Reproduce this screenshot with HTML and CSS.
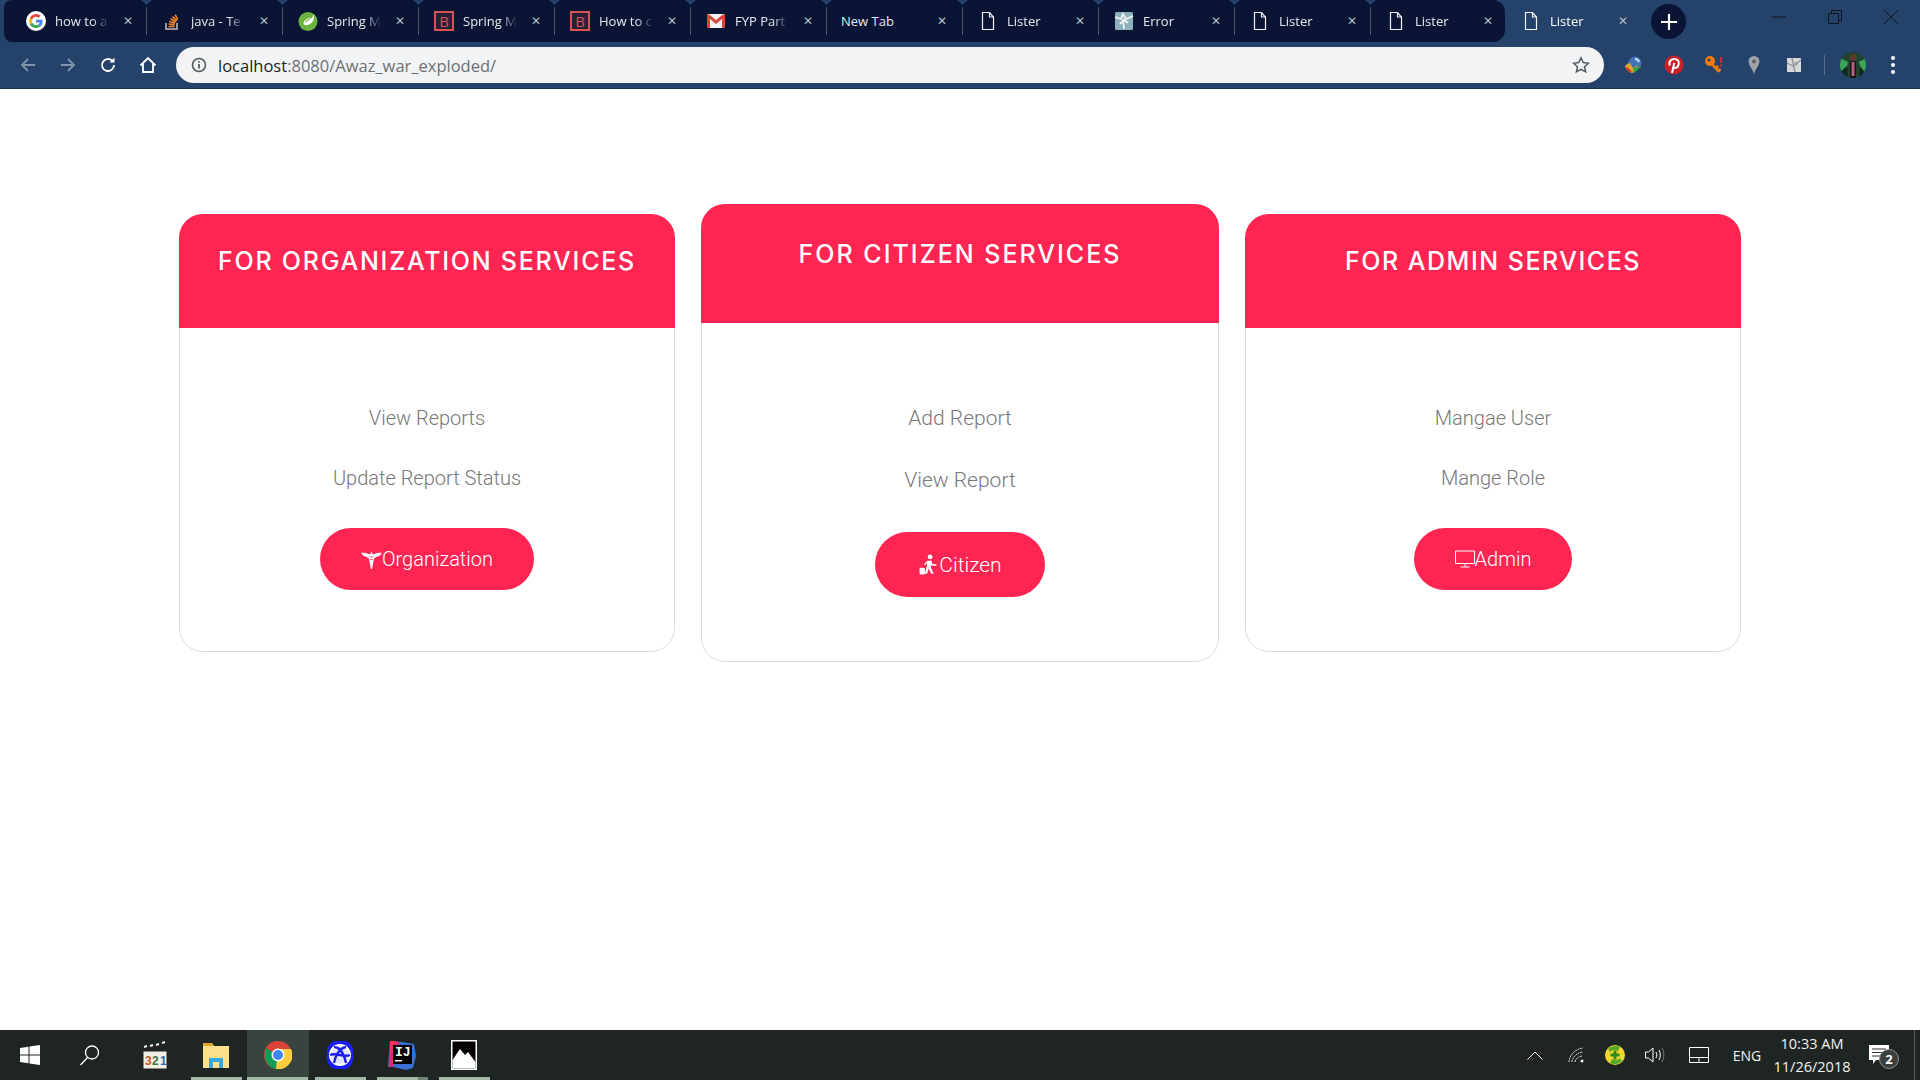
FILE: index.html
```html
<!DOCTYPE html>
<html lang="en">
<head>
    <meta charset="utf-8">
    <title>Lister</title>
    <link rel="stylesheet" href="styles.css">
</head>
<body>
    <header class="browser">
        <div class="tabstrip">
            <div class="tabs">
                <div class="tab">
                    <svg class="tab-icon" viewBox="0 0 20 20"><circle cx="10" cy="10" r="10" fill="#fff"/><path d="M16.6 10.2c0-.5 0-1-.1-1.400H10v2.700h3.700a3.200 3.200 0 0 1-1.400 2.100l2.200 1.700c1.300-1.200 2.100-3 2.100-5.100z" fill="#4285f4"/><path d="M10 17c1.900 0 3.400-.6 4.500-1.700l-2.200-1.700c-.6.4-1.400.7-2.300.7-1.800 0-3.300-1.200-3.800-2.800l-2.300 1.800C5 15.500 7.300 17 10 17z" fill="#34a853"/><path d="M6.200 11.500a4.200 4.200 0 0 1 0-2.900L3.900 6.800a7 7 0 0 0 0 6.500z" fill="#fbbc05"/><path d="M10 5.800c1 0 1.900.4 2.600 1l2-2A7 7 0 0 0 3.900 6.800l2.300 1.800C6.700 7 8.200 5.800 10 5.800z" fill="#ea4335"/></svg>
                    <span class="tab-title">how to a</span><span class="tab-close">&#x2715;</span>
                </div>
                <div class="tab">
                    <svg class="tab-icon" viewBox="0 0 20 20"><path d="M4 12v6h11v-6" fill="none" stroke="#bcbbbb" stroke-width="1.600"/><path d="M6.500 15.500h6M6.700 13l6 .6M7.300 10.400l5.800 1.500M8.600 7.800l5.200 3M10.500 5.600l4.300 4.100M13.200 3.700l2.500 5" stroke="#f48024" stroke-width="1.600" fill="none"/></svg>
                    <span class="tab-title">java - Te</span><span class="tab-close">&#x2715;</span>
                </div>
                <div class="tab">
                    <svg class="tab-icon" viewBox="0 0 20 20"><circle cx="10" cy="10.500" r="9.500" fill="#6db33f"/><path d="M16 3c.5 5-1.500 10-6.500 11-2 .4-3.500-.2-4-1 0-4 4.500-6.500 8-6-3 .5-6 2.500-7 5.500 4-3.500 8-4.500 9.500-9.500z" fill="#fff"/></svg>
                    <span class="tab-title">Spring M</span><span class="tab-close">&#x2715;</span>
                </div>
                <div class="tab">
                    <span class="tab-icon boot-icon">B</span>
                    <span class="tab-title">Spring M</span><span class="tab-close">&#x2715;</span>
                </div>
                <div class="tab">
                    <span class="tab-icon boot-icon">B</span>
                    <span class="tab-title">How to c</span><span class="tab-close">&#x2715;</span>
                </div>
                <div class="tab">
                    <svg class="tab-icon" viewBox="0 0 20 20"><rect x="1" y="3" width="18" height="14" rx="1" fill="#f3f3f3"/><path d="M1 4v13h3V8l6 5 6-5v9h3V4l-1.500-1L10 9 2.500 3z" fill="#d9473a"/></svg>
                    <span class="tab-title">FYP Part</span><span class="tab-close">&#x2715;</span>
                </div>
                <div class="tab tab-noicon">
                    <span class="tab-title">New Tab</span><span class="tab-close">&#x2715;</span>
                </div>
                <div class="tab">
                    <svg class="tab-icon" viewBox="0 0 20 20"><path class="doc" d="M4.500 1.500h7l4 4.500v12.500h-11zM11.500 1.500V6h4"/></svg>
                    <span class="tab-title">Lister</span><span class="tab-close">&#x2715;</span>
                </div>
                <div class="tab">
                    <svg class="tab-icon" viewBox="0 0 20 20"><rect x="1" y="1" width="18" height="18" rx="1.500" fill="#8fb0bd"/><path d="M1 6l6 2 2-5 3 5 7-3M9 8l1 10M6 13l4-4 4 3" stroke="#eef2f3" stroke-width="1.800" fill="none"/></svg>
                    <span class="tab-title">Error</span><span class="tab-close">&#x2715;</span>
                </div>
                <div class="tab">
                    <svg class="tab-icon" viewBox="0 0 20 20"><path class="doc" d="M4.500 1.500h7l4 4.500v12.500h-11zM11.500 1.500V6h4"/></svg>
                    <span class="tab-title">Lister</span><span class="tab-close">&#x2715;</span>
                </div>
                <div class="tab tab-last">
                    <svg class="tab-icon" viewBox="0 0 20 20"><path class="doc" d="M4.500 1.500h7l4 4.500v12.500h-11zM11.500 1.500V6h4"/></svg>
                    <span class="tab-title">Lister</span><span class="tab-close">&#x2715;</span>
                </div>
            </div>
            <div class="tab tab-active">
                <svg class="tab-icon" viewBox="0 0 20 20"><path class="doc" d="M4.500 1.500h7l4 4.500v12.500h-11zM11.500 1.500V6h4"/></svg>
                <span class="tab-title">Lister</span><span class="tab-close">&#x2715;</span>
            </div>
            <div class="new-tab">
                <svg viewBox="0 0 16 16" width="16" height="16"><path d="M8 0v16M0 8h16" stroke="#fff" stroke-width="2.200"/></svg>
            </div>
            <div class="win-controls">
                <svg class="win-btn" viewBox="0 0 14 14"><path d="M0 7h14" stroke="#10141c" stroke-width="1"/></svg>
                <svg class="win-btn" viewBox="0 0 14 14"><path d="M.5 3.500h10v10H.500zM3.500 3.500v-3h10v10h-3" stroke="#10141c" fill="none"/></svg>
                <svg class="win-btn" viewBox="0 0 14 14"><path d="M0 0l14 14M14 0L0 14" stroke="#10141c"/></svg>
            </div>
        </div>
        <div class="toolbar">
            <div class="nav-btn"><svg viewBox="0 0 18 18"><path d="M16 9H3M9 3L3 9l6 6" class="nav-dim"/></svg></div>
            <div class="nav-btn"><svg viewBox="0 0 18 18"><path d="M2 9h13M9 3l6 6-6 6" class="nav-dim"/></svg></div>
            <div class="nav-btn"><svg viewBox="0 0 18 18"><path d="M15 9a6 6 0 1 1-1.800-4.300" class="nav-on"/><path d="M15.500 1.500v5h-5z" fill="#fff"/></svg></div>
            <div class="nav-btn"><svg viewBox="0 0 18 18"><path d="M1.500 9.500L9 2l7.500 7.500M4 8v8h10V8" class="nav-on"/></svg></div>
            <div class="omnibox">
                <svg class="omni-info" viewBox="0 0 16 16"><circle cx="8" cy="8" r="6.500" fill="none" stroke="#555a60" stroke-width="1.600"/><path d="M8 7v4.500M8 4.200v1.600" stroke="#555a60" stroke-width="1.800"/></svg>
                <span class="url"><span class="url-host">localhost</span>:8080/Awaz_war_exploded/</span>
                <svg class="omni-star" viewBox="0 0 18 18"><path d="M9 1.800l2.200 4.800 5.200.6-3.900 3.500 1.100 5.200L9 13.300l-4.600 2.600 1.100-5.200-3.900-3.500 5.200-.6z" fill="none" stroke="#555a60" stroke-width="1.500"/></svg>
            </div>
            <div class="ext-btn"><svg viewBox="0 0 20 20"><circle cx="11" cy="8" r="6.500" fill="#3f73b5"/><path d="M11 4a4 4 0 0 1 4 3" stroke="#cfe3f5" stroke-width="2" fill="none"/><path d="M1 12c1-3 3-4 5-4l3 5 5-3-5 8c-3 0-6-2-8-6z" fill="#e0a22b"/><path d="M9 13l9-2-8 7z" fill="#35a545"/><path d="M2 13c2 1 3 2 5 4" stroke="#c4392d" stroke-width="2" fill="none"/></svg></div>
            <div class="ext-btn"><svg viewBox="0 0 20 20"><circle cx="10" cy="10" r="9.500" fill="#cb2027"/><path d="M8 18l2.300-10M5.800 10.500c-1.500-4 1.500-6.500 4.700-6.500 3 0 4.700 2 4.200 5-.5 3-2.500 4.500-4.300 3.800-.7-.3-1-.7-1.200-1.300" fill="none" stroke="#fff" stroke-width="2"/></svg></div>
            <div class="ext-btn"><svg viewBox="0 0 20 20"><circle cx="6" cy="6" r="5" fill="#f57c00"/><circle cx="5" cy="5" r="1.500" fill="#24426a"/><path d="M8 9l7 8M12 13l2-2M14.500 16l2-2" stroke="#f57c00" stroke-width="2.600" fill="none"/><path d="M17 2v6M17 9.500v2" stroke="#d32f2f" stroke-width="1.800"/></svg></div>
            <div class="ext-btn"><svg viewBox="0 0 20 20"><path d="M10 1a5.500 5.500 0 0 0-5.500 5.500C4.500 10 8.500 14 10 19c1.500-5 5.500-9 5.500-12.500A5.500 5.500 0 0 0 10 1z" fill="#9ea3a8"/><circle cx="10" cy="6.500" r="2" fill="#5f6368"/></svg></div>
            <div class="ext-btn"><svg viewBox="0 0 20 20"><rect x="3" y="3" width="14" height="14" fill="#d6d8da"/><path d="M3 8l6 3 8-6M8 3l3 14M13 10l-2-3" stroke="#8c9094" stroke-width="1.300" fill="none"/></svg></div>
            <div class="toolbar-sep"></div>
            <div class="avatar"><svg viewBox="0 0 26 26"><defs><clipPath id="av"><circle cx="13" cy="13" r="13"/></clipPath></defs><g clip-path="url(#av)"><rect width="26" height="26" fill="#20442f"/><path d="M0 6l8 4-2 8-6 2zM26 6l-7 4 2 9 5 1z" fill="#3da557"/><path d="M0 20l7-6 1 12H0zM26 22l-6-8-1 12h7z" fill="#0f2a1c"/><rect x="10" y="9" width="6" height="17" fill="#141419"/><rect x="11.500" y="10" width="3" height="14" fill="#b4617f"/><circle cx="13" cy="5.500" r="3.500" fill="#5a3c2c"/></g></svg></div>
            <div class="menu-dots"><i></i><i></i><i></i></div>
        </div>
    </header>

    <main class="services">
        <section class="card">
            <h2 class="card-title">FOR ORGANIZATION SERVICES</h2>
            <ul class="card-list">
                <li>View Reports</li>
                <li>Update Report Status</li>
            </ul>
            <a class="btn" href="#">
                <svg class="btn-icon" viewBox="0 0 20 20"><path d="M0 3.500c3 0 6 .3 8.600 1.700L10 2.500l1.400 2.700C14 3.800 17 3.500 20 3.500c-1 2-3 3.500-5.500 4.200L12.500 9 10.500 19h-1L7.500 9 5.500 7.700C3 7 1 5.500 0 3.500z" fill="#fff"/><path d="M8 7.500h4M8.500 10h3" stroke="#ff2553" stroke-width=".7"/></svg>Organization
            </a>
        </section>

        <section class="card card-featured">
            <h2 class="card-title">FOR CITIZEN SERVICES</h2>
            <ul class="card-list">
                <li>Add Report</li>
                <li>View Report</li>
            </ul>
            <a class="btn" href="#">
                <svg class="btn-icon" viewBox="0 0 20 20"><circle cx="11.500" cy="2.800" r="2.300" fill="#fff"/><path d="M9 6.500h4l.5 3 4 .3v1.500l-5-.4-.3 2 2.800 6h-2.300l-2.500-5-1.600 5H6.500l2-7.600.2-3.200-1.800 2.500-1.400-.8z" fill="#fff"/><rect x="1.500" y="13" width="5" height="6.500" rx="1" fill="#fff"/></svg>Citizen
            </a>
        </section>

        <section class="card card-admin">
            <h2 class="card-title">FOR ADMIN SERVICES</h2>
            <ul class="card-list">
                <li>Mangae User</li>
                <li>Mange Role</li>
            </ul>
            <a class="btn" href="#">
                <svg class="btn-icon btn-icon-wide" viewBox="0 0 20 18"><path d="M.5 1h19v12.500H.5zM10 13.500V17M5.500 17h9" fill="none" stroke="#fff" stroke-width="1"/></svg>Admin
            </a>
        </section>
    </main>

    <footer class="taskbar">
        <div class="task-slot task-start">
            <svg viewBox="0 0 20 20" width="20" height="20"><path d="M0 3l8.500-1.200v7.700H0zM9.500 1.600L20 0v9.500H9.500zM0 10.500h8.500v7.700L0 17zM9.500 10.500H20V20L9.500 18.400z" fill="#fff"/></svg>
        </div>
        <div class="task-slot task-search">
            <svg viewBox="0 0 22 22" width="22" height="22"><circle cx="13" cy="8.500" r="6.500" fill="none" stroke="#fff" stroke-width="1.300"/><path d="M8.500 13.500L1.500 21" stroke="#fff" stroke-width="1.300"/></svg>
        </div>
        <div class="task-slot">
            <svg viewBox="0 0 28 32" width="28" height="32"><path d="M1 8l25-5 1 5-25 5z" fill="#222"/><path d="M4 8l3-1M10 7l3-1M16 6l3-1M22 4l3-1" stroke="#eee" stroke-width="2"/><rect x="3" y="12" width="24" height="18" fill="#f2efe6" stroke="#222"/><text x="5" y="26" class="mpc-num" fill="#c8562b">3</text><text x="12" y="26" class="mpc-num" fill="#3a7a3a">2</text><text x="20" y="26" class="mpc-num" fill="#2c6bb0">1</text></svg>
        </div>
        <div class="task-slot task-open">
            <svg viewBox="0 0 28 28" width="28" height="28"><path d="M1 2h9l2 3h15v22H1z" fill="#ffe08a"/><path d="M1 2h9l1 3H1z" fill="#e2a52c"/><path d="M7 17h14v10h-4v-6h-6v6H7z" fill="#39a9e0"/></svg>
        </div>
        <div class="task-slot task-open task-active">
            <svg viewBox="0 0 28 28" width="28" height="28"><circle cx="14" cy="14" r="14" fill="#db4437"/><path d="M14 14L2 7 .5 14C1 21 6 27 12 28z" fill="#0f9d58"/><path d="M14 8h13a14 14 0 0 1-15 20z" fill="#ffcd40"/><circle cx="14" cy="14" r="6.500" fill="#fff"/><circle cx="14" cy="14" r="5" fill="#4285f4"/></svg>
        </div>
        <div class="task-slot task-open">
            <svg viewBox="0 0 28 30" width="28" height="30"><path d="M8 1h12c6 2 8 8 7 14 1 7-2 12-7 14H8c-5-2-8-8-7-14C0 9 3 3 8 1z" fill="#1c1ff0"/><circle cx="14" cy="15" r="10" fill="#dfe3ff" stroke="#fff" stroke-width="2"/><path d="M8 7c7 0 11 10 12 16M20 7C13 8 9 17 8 23M4 15c7-3 13 3 20 0" fill="none" stroke="#1c1ff0" stroke-width="2.400"/></svg>
        </div>
        <div class="task-slot task-open task-split">
            <svg viewBox="0 0 30 30" width="30" height="30"><path d="M3 1l12 1 12 2 2 12-3 12-7 2-13-3-5 0z" fill="#3b6fd4"/><path d="M3 1l10 1L6 27H2z" fill="#d12f6d"/><path d="M3 1l6 0-6 12z" fill="#ff3158"/><rect x="6" y="5" width="19" height="19" fill="#000"/><text x="8" y="16" class="ij-text">IJ</text><rect x="8" y="20" width="7" height="1.500" fill="#fff"/></svg>
        </div>
        <div class="task-slot task-open">
            <svg viewBox="0 0 26 30" width="26" height="30"><rect width="26" height="30" fill="#fff"/><rect x="1.500" y="1.500" width="23" height="27" fill="#000"/><path d="M1.500 28.500V20L9 9l5 6 3-3 7.500 10v6.500z" fill="#fff"/></svg>
        </div>
        <div class="tray">
            <div class="tray-item tray-chevron"><svg viewBox="0 0 16 9" width="16" height="9"><path d="M.5 8.500L8 1l7.500 7.500" fill="none" stroke="#fff"/></svg></div>
            <div class="tray-item tray-wifi"><svg viewBox="0 0 16 16" width="16" height="16"><path d="M1 15C1.500 8 7 2 15 1M4 15c.5-5 4.500-9 11-10M7 15c.5-3 3-5.500 7-6" fill="none" stroke="#cfd2d0" stroke-width="1" stroke-dasharray="2 .6"/><circle cx="14" cy="14" r="1.500" fill="#fff"/></svg></div>
            <div class="tray-item tray-green"><svg viewBox="0 0 20 20" width="20" height="20"><circle cx="10" cy="10" r="10" fill="#f2d82e"/><path d="M3 4a10 10 0 0 1 12-2l-2 4a6 6 0 0 0-8 1zM17 16a10 10 0 0 1-12 2l2-4a6 6 0 0 0 8-1z" fill="#5aa72c"/><path d="M10 5.500v9M5.500 10h9" stroke="#2e8b22" stroke-width="3"/></svg></div>
            <div class="tray-item tray-volume"><svg viewBox="0 0 20 16" width="20" height="16"><path d="M.5 5h3L8 1v14l-4.500-4h-3z" fill="none" stroke="#fff"/><path d="M11 5c1 1.500 1 4.500 0 6M14 3c1.700 3 1.700 7 0 10" fill="none" stroke="#fff"/><path d="M17 1c2.500 4 2.500 10 0 14" fill="none" stroke="#777"/></svg></div>
            <div class="tray-item tray-tablet"><svg viewBox="0 0 20 16" width="20" height="16"><path d="M.5.5h19v15H.500zM.5 10.500h19M10 10.500v5" fill="none" stroke="#fff"/></svg></div>
            <div class="tray-item tray-lang">ENG</div>
            <div class="tray-item tray-clock"><span>10:33 AM</span><span>11/26/2018</span></div>
            <div class="tray-item tray-notify">
                <svg viewBox="0 0 20 20" width="20" height="20"><path d="M0 0h20v15H7l-3 4v-4H0z" fill="#fff"/><path d="M3 4h14M3 7.500h14M3 11h14" stroke="#333"/></svg>
                <span class="notify-badge">2</span>
            </div>
            <div class="tray-peek"></div>
        </div>
    </footer>
</body>
</html>
```

FILE: styles.css
```css
* {
    box-sizing: border-box;
}

html, body {
    margin: 0;
    height: 100%;
}

body {
    display: flex;
    flex-direction: column;
    overflow: hidden;
    background: #fff;
    font-family: Roboto, "Liberation Sans", sans-serif;
}

/* browser chrome */

.browser {
    flex: none;
    height: 89px;
    border-bottom: 1px solid #1a3050;
    background: #24426a;
    font-family: "Open Sans", "Liberation Sans", sans-serif;
}

.tabstrip {
    display: flex;
    height: 42px;
    padding-left: 4px;
}

.tabs {
    display: flex;
    width: 1501px;
    padding-left: 7px;
    background: #0a1536;
    border-radius: 8px 12px 12px 8px;
}

.tab {
    position: relative;
    display: flex;
    flex: none;
    align-items: center;
    width: 136px;
    padding-left: 15px;
    border-right: 1px solid #47566f;
    border-image: linear-gradient(#0a1536 8px, #47566f 8px, #47566f 34px, #0a1536 34px) 1;
    color: #e6e8ec;
    font-size: 13px;
}

.tab::after {
    content: "";
    position: absolute;
    top: 0;
    right: -6px;
    width: 11px;
    height: 5px;
    background: #24426a;
    clip-path: polygon(0 0, 100% 0, 50% 100%);
}

.tab-last {
    width: 130px;
    border-right: 0;
    border-image: none;
}

.tab-last::after,
.tab-active::after {
    display: none;
}

.tab-active {
    width: 130px;
    padding-left: 16px;
    border: 0;
    border-image: none;
    color: #fff;
}

.tab-icon {
    flex: none;
    width: 20px;
    height: 20px;
    margin-right: 9px;
}

.doc {
    fill: none;
    stroke: #f2f3f5;
    stroke-width: 1.2;
}

.boot-icon {
    display: flex;
    align-items: center;
    justify-content: center;
    border: 2px solid #d9534f;
    background: #2a1e3a;
    color: #d9534f;
    font-size: 15px;
    line-height: 1;
}

.tab-title {
    width: 54px;
    overflow: hidden;
    white-space: nowrap;
    -webkit-mask-image: linear-gradient(90deg, #000 70%, transparent 100%);
    mask-image: linear-gradient(90deg, #000 70%, transparent 100%);
}

.tab-close {
    flex: none;
    width: 12px;
    margin-left: 13px;
    color: #b6bcc7;
    font-size: 12px;
    font-family: "DejaVu Sans", sans-serif;
    text-align: center;
}

.tab-noicon {
    padding-left: 14px;
}

.tab-noicon .tab-title {
    width: 60px;
    -webkit-mask-image: none;
    mask-image: none;
}

.tab-noicon .tab-close {
    margin-left: 35px;
}

.new-tab {
    display: flex;
    align-items: center;
    justify-content: center;
    width: 35px;
    height: 35px;
    margin: 4px 0 0 16px;
    border-radius: 50%;
    background: #0a1536;
}

.win-controls {
    display: flex;
    gap: 42px;
    margin-left: auto;
    padding: 10px 22px 0 0;
}

.win-btn {
    width: 14px;
    height: 14px;
}

.toolbar {
    display: flex;
    align-items: center;
    height: 46px;
    padding-left: 8px;
}

.nav-btn {
    display: flex;
    flex: none;
    align-items: center;
    justify-content: center;
    width: 40px;
}

.nav-btn svg {
    width: 18px;
    height: 18px;
}

.nav-dim,
.nav-on {
    fill: none;
    stroke-width: 1.8;
}

.nav-dim {
    stroke: #8393aa;
}

.nav-on {
    stroke: #fff;
}

.omnibox {
    display: flex;
    flex: none;
    align-items: center;
    width: 1428px;
    height: 36px;
    margin-left: 8px;
    padding: 0 14px 0 15px;
    border-radius: 18px;
    background: #f1f3f4;
    color: #6b7076;
    font-size: 16.5px;
}

.omni-info {
    width: 16px;
    height: 16px;
    margin-right: 11px;
}

.url-host {
    color: #1d1f21;
}

.omni-star {
    width: 18px;
    height: 18px;
    margin-left: auto;
}

.ext-btn {
    display: flex;
    flex: none;
    align-items: center;
    justify-content: center;
    width: 40px;
}

.ext-btn svg {
    width: 20px;
    height: 20px;
}

.omnibox + .ext-btn {
    margin-left: 10px;
}

.toolbar-sep {
    flex: none;
    width: 1px;
    height: 20px;
    margin-left: 10px;
    background: #58708f;
}

.avatar {
    flex: none;
    width: 26px;
    height: 26px;
    margin-left: 15px;
}

.menu-dots {
    display: flex;
    flex: none;
    flex-direction: column;
    gap: 3px;
    margin-left: 25px;
}

.menu-dots i {
    width: 4px;
    height: 4px;
    border-radius: 50%;
    background: #fff;
}

/* service cards */

.services {
    display: flex;
    flex: none;
    align-items: center;
    gap: 26px;
    height: 458px;
    margin-top: 115px;
    padding: 0 179px;
}

.card {
    display: flex;
    flex: none;
    flex-direction: column;
    align-items: center;
    width: 496px;
    height: 438px;
    border: 1px solid #dcdcdc;
    border-radius: 24px;
    color: #777;
}

.card-title {
    width: calc(100% + 2px);
    height: 114px;
    margin: -1px -1px 0;
    padding-top: 32px;
    border-radius: 24px 24px 0 0;
    background: #ff2553;
    color: #fff;
    font-family: Inter, "Open Sans", sans-serif;
    font-size: 25px;
    font-weight: 500;
    line-height: 30px;
    letter-spacing: 1.75px;
    text-align: center;
}

.card-list {
    width: 100%;
    margin: 0;
    padding: 60px 0 0;
    list-style: none;
    font-size: 20px;
    font-weight: 300;
    line-height: 60px;
    text-align: center;
}

.btn {
    display: flex;
    align-items: center;
    justify-content: center;
    height: 62px;
    margin-top: 20px;
    padding: 0 41px;
    border-radius: 31px;
    background: #ff2553;
    color: #fff;
    font-size: 20px;
    font-weight: 300;
    text-decoration: none;
}

.btn-icon {
    flex: none;
    width: 21px;
    height: 21px;
}

.btn-icon-wide {
    width: 20px;
    height: 18px;
}

.card-featured {
    width: 518px;
    height: 458px;
}

.card-featured .card-title {
    height: 119px;
    padding-top: 35px;
    letter-spacing: 2px;
}

.card-featured .card-list {
    padding-top: 64px;
    font-size: 21px;
    line-height: 62px;
}

.card-featured .btn {
    height: 65px;
    margin-top: 21px;
    padding: 0 43px;
    border-radius: 33px;
    font-size: 21px;
}

.card-admin .card-title {
    letter-spacing: 1.5px;
}

/* windows taskbar */

.taskbar {
    display: flex;
    flex: none;
    height: 50px;
    margin-top: auto;
    background: #1e2522;
}

.task-slot {
    position: relative;
    display: flex;
    flex: none;
    align-items: center;
    justify-content: center;
    width: 62px;
}

.task-start {
    width: 60px;
}

.task-search {
    width: 63px;
    padding-right: 3px;
}

.task-open::after {
    content: "";
    position: absolute;
    bottom: 0;
    left: 6px;
    right: 5px;
    height: 3px;
    background: #a3b8a9;
}

.task-active {
    background: #3a443e;
}

.task-active::after {
    left: 0;
    right: 1px;
}

.task-split::after {
    background: linear-gradient(90deg, #a3b8a9 80%, #6f8377 80%);
}

.mpc-num {
    font-family: "Liberation Sans", sans-serif;
    font-size: 12px;
    font-weight: 700;
}

.ij-text {
    fill: #fff;
    font-family: "Liberation Mono", monospace;
    font-size: 13px;
    font-weight: 700;
}

.tray {
    display: flex;
    align-items: center;
    height: 100%;
    margin-left: auto;
    color: #f1f3f2;
    font-family: "Open Sans", "Liberation Sans", sans-serif;
    font-size: 14px;
}

.tray-item {
    display: flex;
    flex: none;
    align-items: center;
    justify-content: center;
}

.tray-chevron { width: 40px; }
.tray-wifi { width: 41px; }
.tray-green { width: 38px; }
.tray-volume { width: 42px; }
.tray-tablet { width: 46px; }
.tray-lang { width: 50px; }

.tray-clock {
    flex-direction: column;
    gap: 5px;
    width: 80px;
    font-size: 14.5px;
    line-height: 18px;
}

.tray-notify {
    position: relative;
    width: 54px;
}

.notify-badge {
    position: absolute;
    top: 4px;
    left: 27px;
    width: 20px;
    height: 20px;
    border: 1px solid #8b918e;
    border-radius: 50%;
    background: #3b403e;
    color: #fff;
    font-size: 13px;
    font-weight: 700;
    line-height: 18px;
    text-align: center;
}

.tray-peek {
    width: 6px;
    height: 100%;
    margin-left: 8px;
    border-left: 1px solid #59605c;
}
```
